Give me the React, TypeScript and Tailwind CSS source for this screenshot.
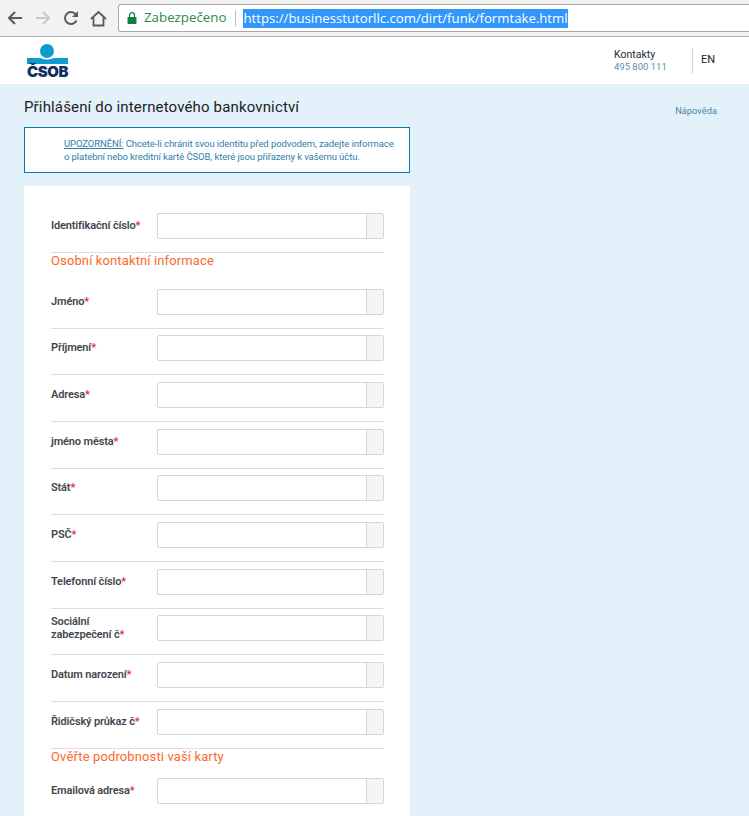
const rows1 = ['Jméno', 'Příjmení', 'Adresa', 'jméno města', 'Stát', 'PSČ', 'Telefonní číslo', 'Sociální zabezpečení č', 'Datum narození', 'Řidičský průkaz č'];

function Field({ label }: { label: string }) {
  return (
    <div className="flex items-start">
      <div className="flex h-[26px] w-[106px] items-center pr-[10px] pb-[1px] text-[11px] leading-[13px] font-semibold tracking-[-0.15px] text-[#43474d]">
        <span>
          {label}
          <span className="text-[#f0233c]">*</span>
        </span>
      </div>
      <div className="flex h-[26px] w-[227px] rounded-[2px] border border-[#d3d6da] bg-white">
        <div className="flex-1" />
        <div className="w-[17px] border-l border-[#d3d6da] bg-[#f4f5f7]" />
      </div>
    </div>
  );
}

function Logo() {
  return (
    <div className="flex w-[41px] flex-col items-center">
      <svg width="41" height="20" viewBox="0 0 41 20" className="block">
        <circle cx="20" cy="7" r="7" fill="#0f9bd0" />
        <path d="M0 14 H12 C15 14 16 15.5 20 15.5 C24 15.5 25 14 28 14 H41 V20 H0 Z" fill="#0f9bd0" />
      </svg>
      <span className="mt-[1px] text-[15px] leading-[13px] font-black tracking-[-0.4px] text-[#10305f] [font-family:Inter,sans-serif]">ČSOB</span>
    </div>
  );
}

export default function App() {
  return (
    <div className="h-[816px] overflow-hidden bg-[#e3f1fb] [font-family:Roboto,sans-serif]">
      {/* Browser bar */}
      <div className="flex h-[37px] items-center border-b border-[#b5b5b5] bg-[#f2f2f2] pl-[7px]">
        <svg width="16" height="16" viewBox="0 0 16 16" fill="none" stroke="#5a5a5a" strokeWidth="2">
          <path d="M15 8H2M8 2L2 8l6 6" />
        </svg>
        <svg width="16" height="16" viewBox="0 0 16 16" fill="none" stroke="#c8c8c8" strokeWidth="2" className="ml-[12px]">
          <path d="M1 8h13M8 2l6 6-6 6" />
        </svg>
        <svg width="16" height="16" viewBox="0 0 16 16" fill="none" stroke="#5a5a5a" strokeWidth="2" className="ml-[12px]">
          <path d="M13.5 10.5A6 6 0 1 1 12.6 4.2" />
          <path d="M15 1v6H9" fill="#5a5a5a" stroke="none" />
        </svg>
        <svg width="17" height="17" viewBox="0 0 17 17" fill="none" stroke="#5a5a5a" strokeWidth="1.8" className="ml-[11px]">
          <path d="M1 9l7.5-7L16 9M3.5 7.5V15.5h10V7.5" />
        </svg>
        <div className="ml-[11px] flex h-[28px] flex-1 items-center rounded-l-[3px] border border-r-0 border-[#a9a9a9] bg-white pl-[8px] [font-family:'Open_Sans',sans-serif]">
          <svg width="10" height="12" viewBox="0 0 10 12" className="shrink-0">
            <path d="M2.5 5V3.2a2.5 2.5 0 0 1 5 0V5" fill="none" stroke="#0b8043" strokeWidth="1.2" />
            <rect x="0.5" y="5" width="9" height="7" rx="0.8" fill="#0b8043" />
          </svg>
          <span className="ml-[7px] text-[13.3px] text-[#2b8a4d]">Zabezpečeno</span>
          <span className="ml-[9px] h-[16px] w-px bg-[#bdbdbd]" />
          <span className="ml-[7px] bg-[#3297fd] text-[13.2px] leading-[19px] text-white">https://businesstutorllc.com/dirt/funk/formtake.html</span>
        </div>
      </div>

      {/* Site header */}
      <div className="flex h-[47px] items-center justify-between bg-white pl-[27px]">
        <Logo />
        <div className="flex items-center">
          <div className="w-[78px] leading-[12px]">
            <div className="text-[10.5px] text-[#2b2b2b]">Kontakty</div>
            <div className="text-[9.5px] text-[#5a8fad]">495 800 111</div>
          </div>
          <div className="flex h-[26px] w-[57px] items-center border-l border-[#d5d5d5] pl-[8px] text-[11px] text-[#222]">EN</div>
        </div>
      </div>

      <div className="px-[24px]">
        <div className="flex h-[43px] items-start justify-between pt-[14px]">
          <h1 className="text-[15px] leading-[18px] font-normal tracking-[0.15px] text-[#222]">Přihlášení do internetového bankovnictví</h1>
          <a className="mt-[7px] mr-[8px] text-[9.3px] leading-[12px] text-[#4a86a8]">Nápověda</a>
        </div>

        <div className="h-[46px] w-[386px] border border-[#0a79a8] bg-white pt-[9px] pl-[39px] text-[9.5px] leading-[13px] tracking-[-0.085px] text-[#2f7ea8]">
          <span className="underline">UPOZORNĚNÍ:</span> Chcete-li chránit svou identitu před podvodem, zadejte informace
          <br />o platební nebo kreditní kartě ČSOB, které jsou přiřazeny k vašemu účtu.
        </div>

        <div className="mt-[13px] h-[700px] w-[386px] bg-white pt-[27px] pr-[26px] pl-[27px]">
          <div className="pb-[13px]">
            <Field label="Identifikační číslo" />
          </div>
          <div className="h-[36.67px] border-t border-[#dcdde0] text-[13px] leading-[15px] tracking-[0.12px] text-[#fa6a2c]">Osobní kontaktní informace</div>
          {rows1.map((label, i) => (
            <div key={label} className={i === 0 ? 'pb-[13px]' : 'border-t border-[#dcdde0] pt-[6.67px] pb-[13px]'}>
              <Field label={label} />
            </div>
          ))}
          <div className="h-[30.5px] border-t border-[#dcdde0] text-[13px] leading-[15px] tracking-[0.12px] text-[#fa6a2c]">Ověřte podrobnosti vaší karty</div>
          <Field label="Emailová adresa" />
        </div>
      </div>
    </div>
  );
}
